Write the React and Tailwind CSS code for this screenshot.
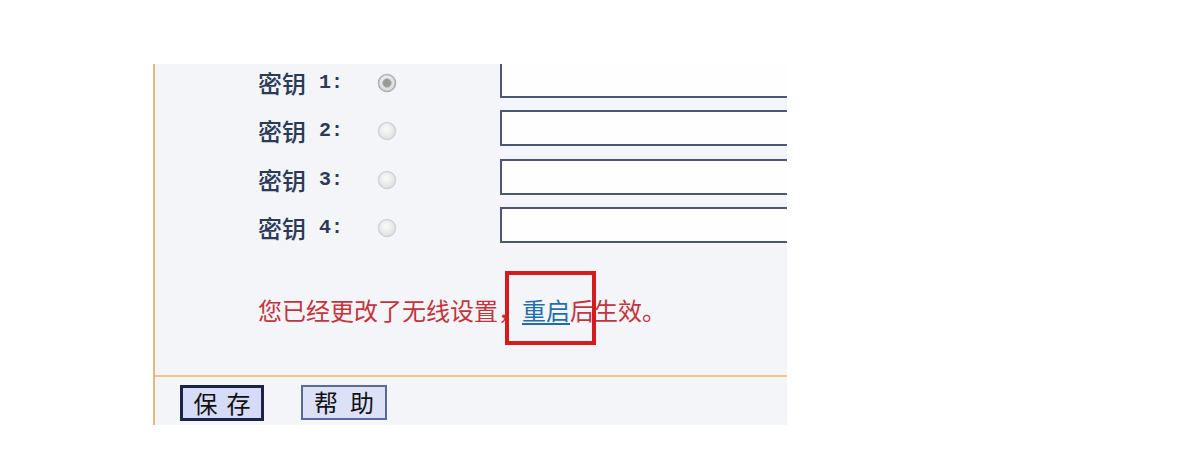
import React from "react";

const keys = [1, 2, 3, 4];

const Radio = ({ checked }) => (
  <svg width="20" height="20" viewBox="0 0 20 20">
    <defs>
      <radialGradient id={checked ? "rg-on" : "rg-off"} cx="45%" cy="40%" r="60%">
        <stop offset="0%" stopColor="#fbfbfb" />
        <stop offset="100%" stopColor={checked ? "#d6d6d6" : "#e0e0e0"} />
      </radialGradient>
    </defs>
    <circle
      cx="10"
      cy="10"
      r="8.5"
      fill={`url(#${checked ? "rg-on" : "rg-off"})`}
      stroke={checked ? "#b0b0b0" : "#d4d4d4"}
      strokeWidth="1.6"
    />
    {checked && <circle cx="10" cy="10" r="4.5" fill="#9a9a9a" stroke="#c4c4c4" strokeWidth="1" />}
  </svg>
);

const KeyRow = ({ n }) => (
  <div className="flex h-[36px] mb-[12.5px]">
    {/* label + radio */}
    <div className="flex items-center pl-[103px] pt-[6px] w-[345px]">
      <span className="w-[119px] flex items-center text-[#2b3a56] text-[24px] leading-none">
        <span className="font-medium">密钥</span>
        <span className="ml-[13px] text-[20px] font-['Liberation_Mono',monospace] font-bold">
          {n}:
        </span>
      </span>
      <Radio checked={n === 1} />
    </div>
    <div className="flex-1 h-full border-2 border-r-0 border-[#4c5873] bg-[#fefeff]" />
  </div>
);

export default function App() {
  return (
    <div className="w-[1190px] h-[453px] bg-white font-['Noto_Sans_CJK_SC',sans-serif]">
      <div className="pt-[64px] pl-[153px]">
        <div className="w-[634px] h-[361px] border-l-2 border-[#e3bb82] bg-[#f4f5f9] overflow-hidden flex flex-col">
          <div className="mt-[-2.5px]">
            {keys.map((n) => (
              <KeyRow key={n} n={n} />
            ))}
          </div>

          {/* notice */}
          <div className="pl-[103px] mt-[38px] h-[32px] flex items-center text-[24px] leading-[32px] text-[#c3343d]">
            <span className="relative">
              您已经更改了无线设置，
              <span className="text-[#1f6fae] underline decoration-2 underline-offset-[3px]">
                重启
              </span>
              后生效。
              <span className="absolute left-[247px] top-[-23px] w-[91px] h-[74px] border-4 border-[#d41c1e]" />
            </span>
          </div>

          <div className="mt-[49px] h-[2px] bg-[#f0c48e]" />

          <div className="flex items-start pl-[25px] pt-[8px] gap-[37px]">
            <button
              type="button"
              className="w-[84px] h-[36px] border-[3px] border-[#1c2347] bg-[#d6dbf7] flex items-center justify-center gap-[9px] text-[24px] leading-none text-[#111]"
            >
              <span>保</span>
              <span>存</span>
            </button>
            <button
              type="button"
              className="w-[86px] h-[35px] border-2 border-[#586b92] bg-[#dde1f8] flex items-center justify-center gap-[12px] text-[24px] leading-none text-[#111]"
            >
              <span>帮</span>
              <span>助</span>
            </button>
          </div>
        </div>
      </div>
    </div>
  );
}
